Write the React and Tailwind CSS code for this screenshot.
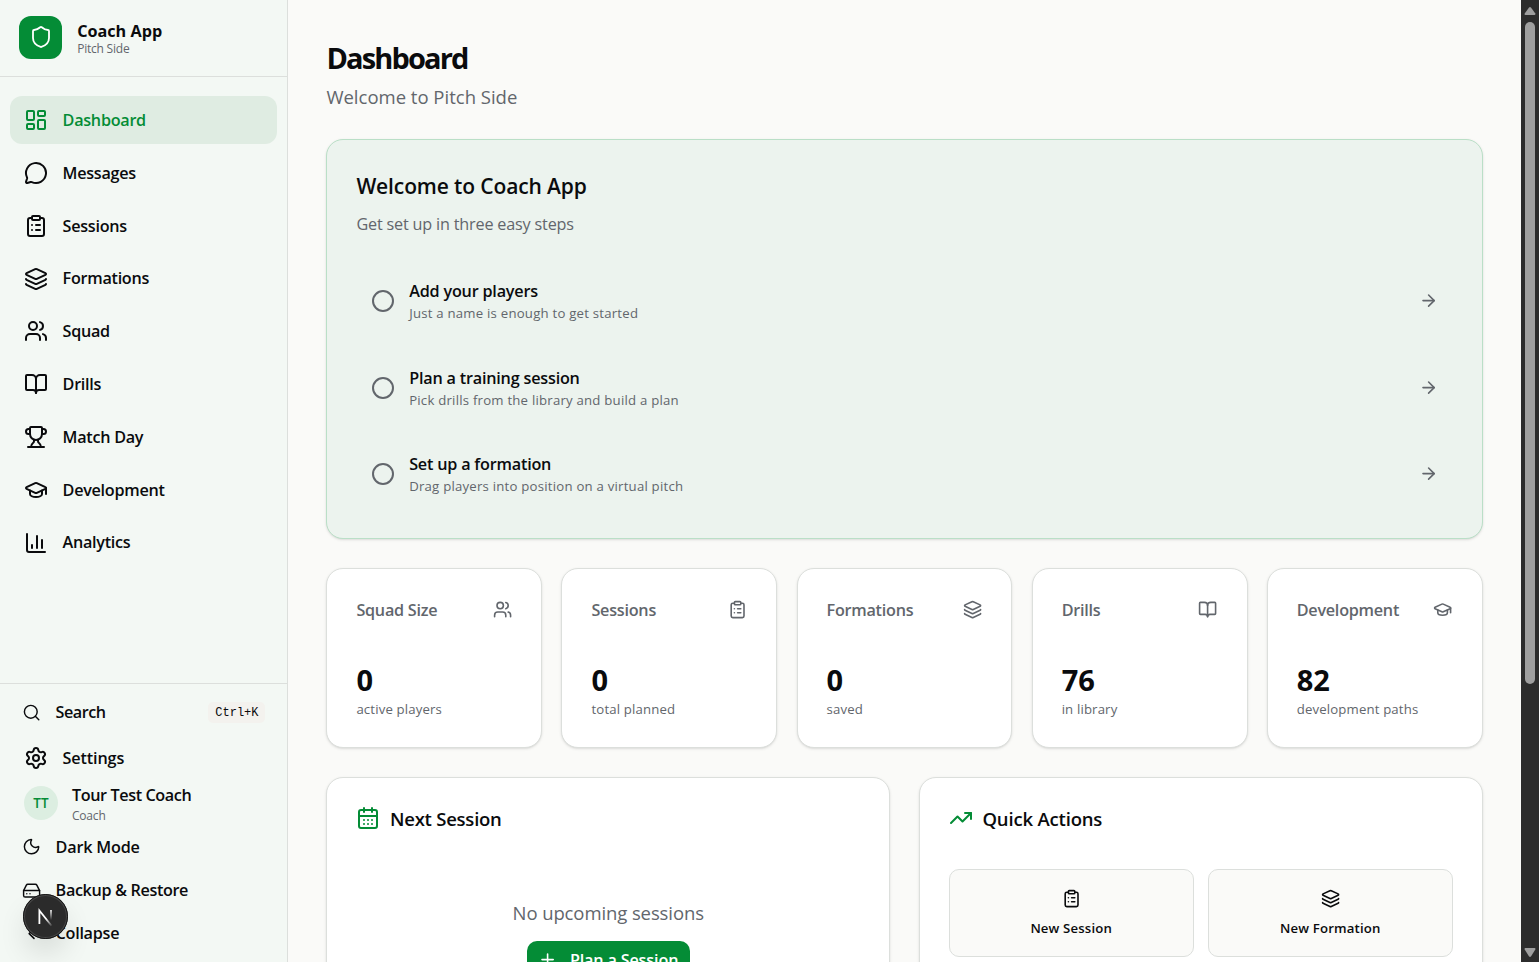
import {
  LayoutDashboard, MessageCircle, ClipboardList, Layers, Users, BookOpen, Trophy, GraduationCap,
  ChartColumn, Search, Settings, Moon, HardDrive, ChevronLeft, Shield, Circle, ArrowRight, CalendarDays, TrendingUp, Plus,
} from 'lucide-react';

const navItems = [
  { icon: LayoutDashboard, label: 'Dashboard', active: true },
  { icon: MessageCircle, label: 'Messages' },
  { icon: ClipboardList, label: 'Sessions' },
  { icon: Layers, label: 'Formations' },
  { icon: Users, label: 'Squad' },
  { icon: BookOpen, label: 'Drills' },
  { icon: Trophy, label: 'Match Day' },
  { icon: GraduationCap, label: 'Development' },
  { icon: ChartColumn, label: 'Analytics' },
];

const steps = [
  { title: 'Add your players', text: 'Just a name is enough to get started' },
  { title: 'Plan a training session', text: 'Pick drills from the library and build a plan' },
  { title: 'Set up a formation', text: 'Drag players into position on a virtual pitch' },
];

const stats = [
  { label: 'Squad Size', icon: Users, value: 0, note: 'active players' },
  { label: 'Sessions', icon: ClipboardList, value: 0, note: 'total planned' },
  { label: 'Formations', icon: Layers, value: 0, note: 'saved' },
  { label: 'Drills', icon: BookOpen, value: 76, note: 'in library' },
  { label: 'Development', icon: GraduationCap, value: 82, note: 'development paths' },
];

const quickActions = [
  { icon: ClipboardList, label: 'New Session' },
  { icon: Layers, label: 'New Formation' },
];

function Sidebar() {
  return (
    <aside className="w-72 flex-shrink-0 flex flex-col bg-[#f3f8f4] border-r border-[#dcdfdc]">
      <div className="h-[77px] flex items-center gap-[15px] px-[19.2px] border-b border-[#dcdfdc]">
        <div className="-mt-[2px] w-[43px] h-[43px] rounded-[12px] bg-[#048c36] flex items-center justify-center">
          <Shield size={24} strokeWidth={1.8} className="text-white" />
        </div>
        <div className="pt-[2px]">
          <p className="text-[16.2px] leading-5 font-bold">Coach App</p>
          <p className="text-[12px] leading-4 tracking-[-0.22px] text-[#62666c]">Pitch Side</p>
        </div>
      </div>
      <nav className="flex-1 flex flex-col gap-[4.8px] px-[9.6px] pt-[19.2px]">
        {navItems.map((item) => (
          <a key={item.label}
            className={`flex items-center gap-[14.6px] h-12 px-[14.4px] rounded-[12px] text-[16.2px] tracking-[-0.28px] font-semibold ${
              item.active ? 'bg-[#dfece2] text-[#048c36]' : ''
            }`}>
            <item.icon size={24} />
            {item.label}
          </a>
        ))}
      </nav>
      <div className="h-[279px] border-t border-[#dcdfdc] px-[9.6px] text-[16.2px] tracking-[-0.28px] font-semibold">
        <div className="mt-[7px] h-[43px] flex items-center px-3 gap-[14.8px]">
          <Search size={19.2} strokeWidth={1.8} />
          <span className="flex-1 tracking-[-0.5px]">Search</span>
          <kbd className="w-[57px] h-[21px] rounded-[5px] bg-[#f3f2ee] flex items-center justify-center font-['Liberation_Mono',monospace] text-[12px] tracking-normal font-medium">Ctrl+K</kbd>
        </div>
        <div className="h-12 flex items-center gap-[14.4px] px-[14.4px] tracking-[-0.1px]">
          <Settings size={24} />
          Settings
        </div>
        <div className="h-[43px] flex items-center gap-[14px] px-[14.4px]">
          <div className="-mt-px w-[34px] h-[34px] rounded-full bg-[#dceee1] text-[#048c36] text-[13.5px] tracking-normal flex items-center justify-center">TT</div>
          <div className="pt-[2px]">
            <p className="leading-[22px] tracking-[-0.4px]">Tour Test Coach</p>
            <p className="text-[12px] leading-[19px] tracking-[-0.2px] font-normal text-[#62666c]">Coach</p>
          </div>
        </div>
        <div className="h-[43px] pt-px flex items-center px-3 gap-[14.8px] tracking-[-0.2px]">
          <Moon size={19.2} strokeWidth={1.8} />
          Dark Mode
        </div>
        <div className="h-[43px] pt-[2px] flex items-center px-3 gap-[14.8px] tracking-[-0.36px]">
          <HardDrive size={19.2} strokeWidth={1.8} />
          Backup &amp; Restore
        </div>
        <div className="h-[43px] pt-[2px] flex items-center px-3 gap-[14.8px]">
          <ChevronLeft size={19.2} />
          Collapse
        </div>
      </div>
    </aside>
  );
}

function WelcomeCard() {
  return (
    <section className="mt-[29px] h-[400px] rounded-[17px] bg-[#ecf3ee] border border-[#badfc7] shadow-sm px-[29px] pt-[29px]">
      <h2 className="text-[21px] leading-[34px] tracking-[-0.12px] font-semibold">Welcome to Coach App</h2>
      <p className="mt-2 text-[16.2px] leading-[26px] tracking-[-0.18px] text-[#62666c]">Get set up in three easy steps</p>
      <div className="mt-[28px] flex flex-col gap-[14.5px]">
        {steps.map((s) => (
          <div key={s.title} className="h-[72px] flex items-center gap-[14.4px] px-[14.4px]">
            <Circle size={24} className="text-[#62666c]" />
            <div className="flex-1 pt-[2px]">
              <p className="text-[16.2px] leading-[23px] tracking-[-0.2px] font-semibold">{s.title}</p>
              <p className="text-[13.2px] leading-[21px] tracking-[0.22px] text-[#62666c]">{s.text}</p>
            </div>
            <ArrowRight size={19.2} className="text-[#62666c]" />
          </div>
        ))}
      </div>
    </section>
  );
}

function StatCard({ label, icon: Icon, value, note }) {
  return (
    <div className="h-[180px] rounded-[17px] bg-white border border-[#dcdfdc] shadow-sm px-[29px] pt-[29px]">
      <div className="h-6 flex items-center justify-between text-[#62666c]">
        <span className="text-[16.2px] tracking-[-0.25px] font-semibold">{label}</span>
        <Icon size={19.2} />
      </div>
      <p className="mt-[38px] text-[29px] leading-10 font-bold">{value}</p>
      <p className="text-[13.2px] leading-[18px] tracking-[0.15px] text-[#62666c]">{note}</p>
    </div>
  );
}

function Scrollbar() {
  return (
    <div className="w-[18px] flex-shrink-0 bg-[#2c2c2c] flex flex-col items-center">
      <svg width="12" height="8" viewBox="0 0 12 8" className="mt-[7px] flex-shrink-0"><path d="M5.2 0.2 H6.8 L11.3 6.6 Q11.8 8 10.6 8 H1.4 Q0.2 8 0.7 6.6 Z" fill="#9f9f9f" /></svg>
      <div className="mt-[7px] w-[10px] h-[662px] rounded-full bg-[#9f9f9f]" />
      <svg width="12" height="9" viewBox="0 0 12 9" className="mt-auto mb-[5px] flex-shrink-0"><path d="M5.2 8.8 H6.8 L11.3 1.4 Q11.8 0 10.6 0 H1.4 Q0.2 0 0.7 1.4 Z" fill="#9f9f9f" /></svg>
    </div>
  );
}

function DevBadge() {
  return (
    <div className="absolute left-[23px] top-[894px] w-[45px] h-[45px] rounded-full bg-[#2b2b2b] border-2 border-[#454545] outline outline-1 -outline-offset-1 outline-[#151515] shadow-[0_16px_32px_-8px_rgba(0,0,0,0.24)] flex items-center justify-center">
      <svg width="20" height="20" viewBox="0 0 20 20" fill="none">
        <defs>
          <linearGradient id="diag" x1="11" y1="11" x2="17" y2="19" gradientUnits="userSpaceOnUse">
            <stop stopColor="#fff" />
            <stop offset="1" stopColor="#fff" stopOpacity="0" />
          </linearGradient>
          <linearGradient id="stem" x1="14" y1="2" x2="14" y2="13" gradientUnits="userSpaceOnUse">
            <stop stopColor="#fff" />
            <stop offset="1" stopColor="#fff" stopOpacity="0" />
          </linearGradient>
        </defs>
        <path d="M3.4 17V3.5L15.5 18.8" stroke="url(#diag)" strokeWidth="1.8" />
        <path d="M15 3V13" stroke="url(#stem)" strokeWidth="1.8" />
      </svg>
    </div>
  );
}

export default function App() {
  return (
    <div className="relative flex w-[1539px] h-[962px] overflow-hidden bg-[#fafaf8] text-[#0a0b0d] font-['Open_Sans',sans-serif]">
      <Sidebar />
      <main className="flex-1 min-w-0 overflow-hidden px-[38.4px] pt-[37px]">
        <h1 className="text-[29px] leading-[42px] tracking-[-1.85px] font-bold">Dashboard</h1>
        <p className="mt-[5px] text-[18.5px] leading-[26px] text-[#62666c]">Welcome to Pitch Side</p>
        <WelcomeCard />
        <div className="mt-[29px] grid grid-cols-5 gap-[19.2px]">
          {stats.map((s) => <StatCard key={s.label} {...s} />)}
        </div>
        <div className="mt-[29px] grid grid-cols-2 gap-[28.8px]">
          <section className="h-[300px] rounded-[17px] bg-white border border-[#dcdfdc] shadow-sm px-[29px] pt-[27px]">
            <h3 className="h-7 flex items-center gap-[9.6px] text-[18.5px] tracking-[-0.24px] font-semibold">
              <CalendarDays size={24} className="-mt-[2px] text-[#048c36]" />
              Next Session
            </h3>
            <div className="mt-[66px] flex flex-col items-center">
              <p className="text-[18.5px] leading-[28px] tracking-[-0.1px] text-[#62666c]">No upcoming sessions</p>
              <button className="mt-[14px] w-[163px] h-[38px] rounded-[10px] bg-[#048c36] text-white text-[16.2px] tracking-[-0.16px] font-semibold flex items-center justify-center gap-[12.5px]">
                <Plus size={19.2} />
                Plan a Session
              </button>
            </div>
          </section>
          <section className="h-[300px] rounded-[17px] bg-white border border-[#dcdfdc] shadow-sm px-[29px] pt-[27px]">
            <h3 className="h-7 flex items-center gap-[9.6px] text-[18.5px] tracking-[-0.18px] font-semibold">
              <TrendingUp size={24} className="-mt-[2px] text-[#048c36]" />
              Quick Actions
            </h3>
            <div className="mt-[36px] grid grid-cols-2 gap-[14.4px]">
              {quickActions.map((a) => (
                <button key={a.label} className="h-[88px] rounded-[10px] border border-[#dcdfdc] bg-[#fafaf8] flex flex-col items-center pt-[19px] gap-[9.6px]">
                  <a.icon size={19.2} />
                  <span className="text-[13.2px] leading-5 tracking-[0.16px] font-semibold">{a.label}</span>
                </button>
              ))}
            </div>
          </section>
        </div>
      </main>
      <Scrollbar />
      <DevBadge />
    </div>
  );
}
